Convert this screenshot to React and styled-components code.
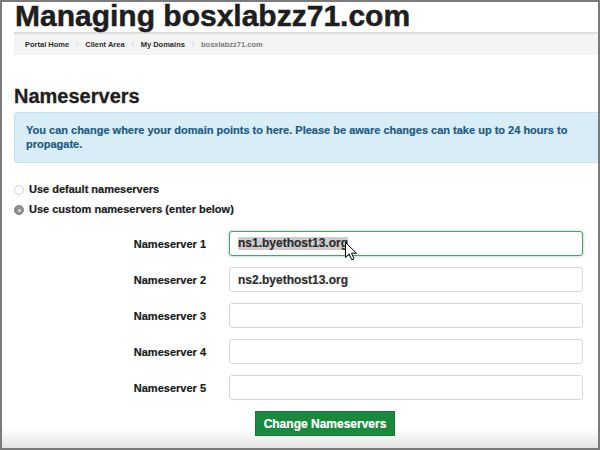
import React from "react";
import styled, { createGlobalStyle } from "styled-components";

const Global = createGlobalStyle`
  html, body { margin: 0; padding: 0; background: #fff; }
  body { font-family: "Liberation Sans", Arial, sans-serif; }
`;

const Frame = styled.div`
  position: relative;
  width: 600px;
  height: 450px;
  box-sizing: border-box;
  border: 2px solid #7a7a7a;
  overflow: hidden;
  background: linear-gradient(to bottom, #fff 0, #fff 426px, #e4e4e4 446px);
`;

const Content = styled.div`
  width: 622px;
  padding-left: 12px;
`;

const Title = styled.h1`
  margin: 0;
  padding-left: 1px;
  font-size: 30px;
  line-height: 27px;
  font-weight: 700;
  color: #1e1e1e;
  white-space: nowrap;
  -webkit-text-stroke: 0.5px #1e1e1e;
`;

const Crumbs = styled.nav`
  display: flex;
  align-items: center;
  margin-top: 3px;
  height: 20px;
  padding: 1px 0 0 11px;
  box-sizing: content-box;
  border-top: 2px solid #dedede;
  background: #f4f4f4;
  font-size: 7.5px;
  font-weight: 700;
  line-height: 20px;
`;

const Crumb = styled.span`
  color: ${(p) => (p.$current ? "#7a7a7a" : "#2b2b2b")};
`;

const Sep = styled.span`
  color: #c6c6c6;
  font-weight: 400;
  padding: 0 7px;
`;

const Heading = styled.h2`
  margin: 29px 0 4px;
  font-size: 20px;
  line-height: 24px;
  font-weight: 700;
  color: #1e1e1e;
  -webkit-text-stroke: 0.3px #1e1e1e;
`;

const Alert = styled.div`
  background: #d9edf7;
  border: 1px solid #bfe3ef;
  border-radius: 3px;
  padding: 10px 30px 11px 11px;
  font-size: 11px;
  line-height: 14px;
  font-weight: 700;
  color: #1d5b84;
  -webkit-text-stroke: 0.2px #1d5b84;
`;

const RadioList = styled.div`
  margin-top: 16px;
  display: flex;
  flex-direction: column;
`;

const RadioRow = styled.label`
  display: flex;
  align-items: center;
  gap: 5px;
  height: 20px;
  font-size: 11px;
  font-weight: 700;
  color: #1a1a1a;
  -webkit-text-stroke: 0.2px #1a1a1a;
`;

const RadioDot = styled.span`
  position: relative;
  width: 10px;
  height: 10px;
  margin-top: 2px;
  box-sizing: border-box;
  border-radius: 50%;
  border: 1px solid ${(p) => (p.$checked ? "#7e7e7e" : "#d2d2d2")};
  background: ${(p) => (p.$checked ? "#8f8f8f" : "#fff")};
  -webkit-text-stroke: 0;
  &::after {
    content: "";
    display: ${(p) => (p.$checked ? "block" : "none")};
    position: absolute;
    left: 2.5px;
    top: 2.5px;
    width: 3px;
    height: 3px;
    border-radius: 50%;
    background: #dcdcdc;
  }
`;

const Form = styled.div`
  margin-top: 12px;
  display: grid;
  grid-template-columns: 192px 354px;
  column-gap: 23px;
  row-gap: 11px;
  align-items: center;
`;

const Label = styled.div`
  text-align: right;
  font-size: 11px;
  font-weight: 700;
  color: #1a1a1a;
  -webkit-text-stroke: 0.2px #1a1a1a;
`;

const Field = styled.div`
  position: relative;
  height: 25px;
  box-sizing: border-box;
  border: 1px solid ${(p) => (p.$focused ? "#4e9f6c" : "#d8d8d8")};
  border-radius: 3px;
  box-shadow: ${(p) => (p.$focused ? "0 0 3px rgba(78,159,108,0.55)" : "none")};
  padding: 0 8px;
  display: flex;
  align-items: center;
  font-size: 12px;
  font-weight: 700;
  color: #2e2e2e;
  -webkit-text-stroke: 0.2px #2e2e2e;
  background: #fff;
`;

const Selected = styled.span`
  background: #cdcdcd;
  line-height: 13px;
`;

const Cursor = styled.svg`
  position: absolute;
  left: 115px;
  top: 10px;
`;

const Actions = styled.div`
  margin-top: 11px;
  display: flex;
  justify-content: center;
`;

const Button = styled.button`
  width: 140px;
  height: 25px;
  border: 1px solid #157834;
  background: #19893d;
  color: #fff;
  font-family: "Liberation Sans", Arial, sans-serif;
  font-size: 12px;
  font-weight: 700;
  padding: 0;
  -webkit-text-stroke: 0.2px #fff;
`;

const servers = ["ns1.byethost13.org", "ns2.byethost13.org", "", "", ""];

export default function App() {
  return (
    <>
      <Global />
      <Frame>
        <Content>
          <Title>Managing bosxlabzz71.com</Title>
          <Crumbs>
            <Crumb>Portal Home</Crumb>
            <Sep>/</Sep>
            <Crumb>Client Area</Crumb>
            <Sep>/</Sep>
            <Crumb>My Domains</Crumb>
            <Sep>/</Sep>
            <Crumb $current>bosxlabzz71.com</Crumb>
          </Crumbs>
          <Heading>Nameservers</Heading>
          <Alert>
            You can change where your domain points to here. Please be aware changes can take up to 24 hours to propagate.
          </Alert>
          <RadioList>
            <RadioRow>
              <RadioDot />
              Use default nameservers
            </RadioRow>
            <RadioRow>
              <RadioDot $checked />
              Use custom nameservers (enter below)
            </RadioRow>
          </RadioList>
          <Form>
            {servers.map((v, i) => (
              <React.Fragment key={i}>
                <Label>Nameserver {i + 1}</Label>
                <Field $focused={i === 0}>
                  {i === 0 ? <Selected>{v}</Selected> : v}
                  {i === 0 && (
                    <Cursor width="13" height="19" viewBox="0 0 13 19">
                      <path
                        d="M0.5 0.5 L0.5 15.5 L4.2 12 L6.8 17.8 L9 16.8 L6.5 11.2 L11.5 11.2 Z"
                        fill="#fff"
                        stroke="#000"
                        strokeWidth="1"
                        strokeLinejoin="miter"
                      />
                    </Cursor>
                  )}
                </Field>
              </React.Fragment>
            ))}
          </Form>
          <Actions>
            <Button>Change Nameservers</Button>
          </Actions>
        </Content>
      </Frame>
    </>
  );
}
